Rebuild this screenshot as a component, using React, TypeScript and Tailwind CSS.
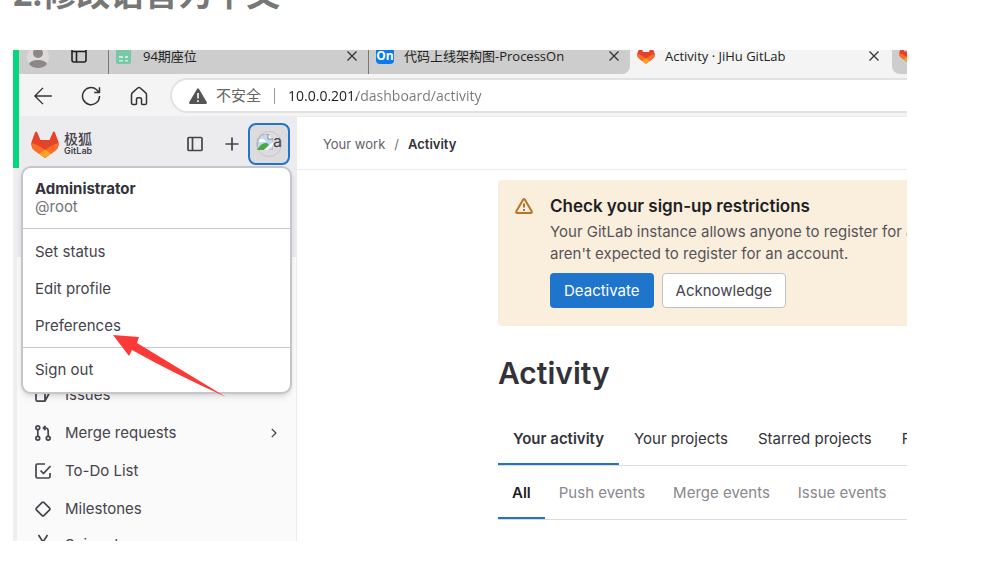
import { ReactNode } from "react";

const accountLinks = ["Set status", "Edit profile", "Preferences"];
const scopeTabs = ["Your activity", "Your projects", "Starred projects", "Followed users"];
const eventTabs = ["All", "Push events", "Merge events", "Issue events"];

function Tanuki({ className }: { className: string }) {
  return (
    <svg className={className} viewBox="0 0 28 27" aria-hidden="true">
      <path d="M.500 11 4.200 1Q5 -.200 6 1L9.500 9H18.500L22 1Q23 -.200 23.800 1L27.500 11Q28.500 16 24.500 19.500L14 27 3.500 19.500Q-.500 16 .500 11Z" fill="#e24329" />
      <path d="M.400 12Q6 13 14 19L8 22.700 3.500 19.500Q-.200 16.500 .400 12ZM27.600 12Q22 13 14 19L20 22.700 24.500 19.500Q28.200 16.500 27.600 12Z" fill="#fc6d26" />
      <path d="M14 18.500 20 22.700 14 27 8 22.700Z" fill="#fca326" />
    </svg>
  );
}

function Glyph({ children, className = "w-4 h-4" }: { children: ReactNode; className?: string }) {
  return (
    <svg
      className={`${className} shrink-0`}
      viewBox="0 0 16 16"
      fill="none"
      stroke="currentColor"
      strokeWidth="1.7"
      strokeLinejoin="round"
      aria-hidden="true"
    >
      {children}
    </svg>
  );
}

const navItems = [
  {
    label: "Issues",
    icon: <path d="M10 14.200H2.500Q1 14.200 1 12.500V3.500Q1 2 2.500 2H8.500Q10 2 10 3.500V14.200L14.800 5 12 3.500" />,
  },
  {
    label: "Merge requests",
    chevron: true,
    icon: (
      <>
        <circle cx="2.800" cy="2.800" r="1.900" />
        <circle cx="2.800" cy="13.200" r="1.900" />
        <circle cx="13.200" cy="13.200" r="1.900" />
        <path d="M2.800 4.700V11.300M13.200 11.300V6Q13.200 3 10.500 3H8.500M10.500 .800 8.300 3 10.500 5.200" />
      </>
    ),
  },
  {
    label: "To-Do List",
    icon: <path d="M10 1H2.500Q1 1 1 2.500V13.500Q1 15 2.500 15H13.500Q15 15 15 13.500V10M5.500 7.500 8.500 10.500 15.500 3" />,
  },
  {
    label: "Milestones",
    icon: <path d="M7.200 1.400Q8 .700 8.800 1.400L14.600 7.200Q15.300 8 14.600 8.800L8.800 14.600Q8 15.300 7.200 14.600L1.400 8.800Q.700 8 1.400 7.200Z" />,
  },
];

function TabClose() {
  return (
    <button aria-label="Close tab" className="flex h-3 shrink-0 items-start text-[#333]">
      <Glyph className="w-3 h-3">
        <path d="M2 2 14 14M14 2 2 14" />
      </Glyph>
    </button>
  );
}

function TabStrip() {
  return (
    <div className="flex h-6 bg-[#f4f4f4] overflow-hidden text-[13px] text-[#222] whitespace-nowrap">
      <div className="flex w-[617px] shrink-0 rounded-br-lg bg-[#cdcdcd]">
        <div className="flex w-[95px] shrink-0 gap-[22px] pl-[14px]">
          <svg className="w-[22px] h-[18px]" viewBox="0 0 20 18" aria-hidden="true">
            <circle cx="10" cy="7" r="11" fill="#dcdbd9" />
            <circle cx="10" cy="3" r="5" fill="#8d8785" />
            <path d="M1 14Q3 10 10 10T19 14Q16 18 10 18T1 14Z" fill="#8d8785" />
          </svg>
          <svg className="w-4 h-[13px]" viewBox="0 0 16 13" fill="none" stroke="#222" strokeWidth="1.600" aria-hidden="true">
            <path d="M1 0V10Q1 12 3 12H13Q15 12 15 10V0M1 1.500H15M5.500 1.500V12" />
          </svg>
        </div>
        <div className="flex w-[260px] shrink-0 border-l border-[#777] pl-[7px] pr-[10px]">
          <svg className="w-4 h-[14px] shrink-0" viewBox="0 0 16 14" aria-hidden="true">
            <path d="M0 0H15V12Q15 14 13 14H2Q0 14 0 12Z" fill="#77c9a6" />
            <path d="M3 6H7V8H3ZM9 6H12V8H9ZM3 10H7V11.500H3ZM9 10H12V11.500H9Z" fill="#c5eedc" />
          </svg>
          <span className="grow pl-[11px] leading-3">94期座位</span>
          <TabClose />
        </div>
        <div className="flex w-[262px] shrink-0 border-l border-[#777] pl-[7px] pr-[10px]">
          <span className="h-[14px] w-[18px] rounded-b bg-[#087bf0] text-center text-xs leading-3 font-bold text-white">On</span>
          <span className="grow pl-[10px] leading-3">代码上线架构图-ProcessOn</span>
          <TabClose />
        </div>
      </div>
      <div className="flex grow pl-[7px] pr-3">
        <Tanuki className="h-[18px] w-[18px] shrink-0 -mt-1" />
        <span className="grow pl-[10px] leading-3">Activity · JiHu GitLab</span>
        <TabClose />
      </div>
      <div className="flex w-[15px] shrink-0 overflow-hidden rounded-bl-lg bg-[#cdcdcd] pl-[7px]">
        <Tanuki className="h-4 w-4 shrink-0 -mt-1" />
      </div>
    </div>
  );
}

function Toolbar() {
  return (
    <div className="flex h-[43px] items-center border-b border-[#ececec] bg-[#f4f4f4] pt-px pl-5">
      <div className="flex w-[137px] shrink-0 gap-7 text-[#333]">
        <button aria-label="Back">
          <Glyph className="w-5 h-5">
            <path d="M15 8H1.500M8 1.500 1.500 8 8 14.500" strokeWidth="1.100" />
          </Glyph>
        </button>
        <button aria-label="Refresh">
          <Glyph className="w-5 h-5">
            <path d="M14.800 8A6.800 6.800 0 1 1 12.500 3L14.500 5M14.800 1V5.200H10.600" strokeWidth="1.200" />
          </Glyph>
        </button>
        <button aria-label="Home">
          <Glyph className="w-5 h-5">
            <path d="M2 7Q2 6 2.800 5.300L7 1.600Q8 .800 9 1.600L13.200 5.300Q14 6 14 7V13.500Q14 14.800 12.700 14.800H10.800Q10 14.800 10 14V10.500Q10 9.300 8.800 9.300H7.200Q6 9.300 6 10.500V14Q6 14.800 5.200 14.800H3.300Q2 14.800 2 13.500Z" strokeWidth="1.200" />
          </Glyph>
        </button>
      </div>
      <div className="flex h-[35px] grow items-center rounded-l-full border-2 border-r-0 border-[#e2e2e2] bg-white pl-[17px] text-sm">
        <svg className="w-[18px] h-4 shrink-0" viewBox="0 0 18 16" aria-hidden="true">
          <path d="M8 1Q9 -.700 10 1L17.700 14Q18.500 16 16.500 16H1.500Q-.500 16 .300 14Z" fill="#555" />
          <path d="M9 5V10.500M9 12.200V14" stroke="#fff" strokeWidth="1.600" />
        </svg>
        <button className="pl-[9px] text-[15px] text-[#666]">不安全</button>
        <span className="mx-[13px] h-4 w-px bg-[#999]" />
        <input
          type="text"
          aria-label="Address"
          defaultValue="10.0.0.201/dashboard/activity"
          className="min-w-0 grow bg-[linear-gradient(90deg,#1b1b1b_69px,#777_69px)] bg-clip-text text-transparent outline-none"
        />
      </div>
    </div>
  );
}

function UserMenu() {
  return (
    <div className="absolute top-[49px] left-1 z-10 w-[271px] rounded-[10px] border-2 border-[#c6c5cb] bg-white shadow-md text-[#45434b]">
      <div className="px-3 py-3 leading-[18px]">
        <p className="font-bold text-[#333238]">Administrator</p>
        <p className="text-[#737278]">@root</p>
      </div>
      <div className="border-y border-[#c6c5cb] pt-[5px] pb-[2px]">
        {accountLinks.map((label) => (
          <a key={label} href="#" className="flex h-[37px] items-center px-3">
            {label}
          </a>
        ))}
      </div>
      <a href="#" className="flex h-11 items-center px-3">
        Sign out
      </a>
      {/* Pointer to Preferences */}
      <svg className="absolute top-[167px] left-[90px] h-[63px] w-[114px]" viewBox="0 0 114 63" aria-hidden="true">
        <path d="M0 0 26 2 24 8 113 62Q60 38 19 15L16 21Z" fill="#fb3a38" />
      </svg>
    </div>
  );
}

function Sidebar() {
  return (
    <aside className="relative w-[283px] shrink-0 border-l-4 border-[#efeff0] bg-[#fafafa] text-[15px] text-[#45434b]">
      <div className="h-[140px] bg-[#ececef]">
        <div className="flex items-center pt-[6px] pl-[14px] pr-[6px]">
          <a href="#" aria-label="Homepage" className="flex grow items-center gap-[5px]">
            <Tanuki className="w-[28px] h-[27px]" />
            <span className="flex flex-col">
              <span className="text-sm leading-[14px] font-medium">极狐</span>
              <span className="text-[9px] leading-[10px] font-semibold">GitLab</span>
            </span>
          </a>
          <div className="flex items-center">
            <button aria-label="Collapse sidebar" className="mr-[21px]">
              <Glyph>
                <path d="M2 1.500H14Q15 1.500 15 2.500V13.500Q15 14.500 14 14.500H2Q1 14.500 1 13.500V2.500Q1 1.500 2 1.500ZM5.500 1.500V14.500" />
              </Glyph>
            </button>
            <button aria-label="Create new" className="mr-2">
              <Glyph>
                <path d="M8 1.500V14.500M1.500 8H14.500" />
              </Glyph>
            </button>
            <button
              aria-label="User menu"
              className="flex h-[42px] w-[42px] items-center justify-center rounded-lg border-2 border-[#1f75cb] bg-[#dcdcde]"
            >
              <span className="flex h-[26px] w-[26px] rounded-full border border-[#c8c8cb] text-base leading-[18px]">
                <svg className="h-4 w-4 shrink-0 mt-[2px]" viewBox="0 0 16 16" aria-hidden="true">
                  <path d="M1 5Q3 1 7 0H11L16 5V16H0Z" fill="#c4d8f6" stroke="#aaa" />
                  <path d="M11 0V5H16" fill="#fff" stroke="#888" />
                  <path d="M2 7Q3 4 6 5T9 8H2Z" fill="#fff" />
                  <path d="M0 16Q4 8 10 9L12 11 7 16Z" fill="#4ba843" />
                  <path d="M7 16 16 8V11L11 16Z" fill="#fff" />
                </svg>
                a
              </span>
            </button>
          </div>
        </div>
      </div>
      <UserMenu />
      <nav className="pt-[119px]">
        {navItems.map((item) => (
          <a key={item.label} href="#" className="flex h-[38px] items-center gap-[14px] pl-[18px] pr-4">
            <Glyph>{item.icon}</Glyph>
            <span className="grow">{item.label}</span>
            {item.chevron && (
              <Glyph className="w-3 h-3">
                <path d="M5 2.500 10.500 8 5 13.500" />
              </Glyph>
            )}
          </a>
        ))}
        <a href="#" className="flex h-[13px] items-start gap-[14px] overflow-hidden pl-[18px] pt-[6px]">
          <Glyph>
            <path d="M3.500 1 10 11M12.500 1 6 11M3.500 11A2 2 0 1 0 3.500 15 2 2 0 1 0 3.500 11M12.500 11A2 2 0 1 0 12.500 15 2 2 0 1 0 12.500 11" />
          </Glyph>
          <span>Snippets</span>
        </a>
      </nav>
    </aside>
  );
}

export default function App() {
  return (
    <div className="overflow-hidden bg-white font-['Inter','Noto_Sans_CJK_SC',sans-serif]">
      <h2 className="-mt-[26px] mb-[37px] pl-[13px] font-['Open_Sans','Noto_Sans_CJK_SC',sans-serif] text-[34px] leading-[39px] font-bold text-[#777]">
        2.修改语言为中文
      </h2>

      <div className="relative ml-[13px] mr-[88px] overflow-hidden">
        <div className="absolute top-0 left-0 z-20 h-[118px] w-[6px] bg-[#05d77e]" />
        <div className="font-['Open_Sans','Noto_Sans_CJK_SC',sans-serif]">
          <TabStrip />
          <Toolbar />
        </div>

        <div className="flex">
          <Sidebar />
          <main className="min-w-0 grow overflow-hidden whitespace-nowrap border-l border-[#ececef] text-[15px] text-[#333238]">
            <nav aria-label="Breadcrumb" className="flex h-[53px] items-center gap-[9px] border-b border-[#ececef] pt-[3px] pl-[26px] text-[13px]">
              <a href="#" className="text-[#626168]">Your work</a>
              <span className="text-[#737278]">/</span>
              <a href="#" className="font-semibold">Activity</a>
            </nav>

            <div className="pt-[10px] pl-[201px]">
              {/* Sign-up notice */}
              <section className="flex h-[146px] gap-[17px] rounded-l bg-[#faefdc] pt-[15px] pl-[17px]">
                <svg className="mt-[3px] h-4 w-[18px] shrink-0" viewBox="0 0 18 16" fill="none" stroke="#b9722a" strokeWidth="2" strokeLinejoin="round" aria-hidden="true">
                  <path d="M8.200 1.500Q9 .500 9.800 1.500L16.800 13.500Q17 15 16 15H2Q1 15 1.200 13.500ZM9 5.500V9.500M9 11V13" />
                </svg>
                <div>
                  <h2 className="text-[17px] leading-[22px] font-semibold text-[#1f1e24]">Check your sign-up restrictions</h2>
                  <p className="pt-1 leading-[22px] text-[#57535a]">
                    Your GitLab instance allows anyone to register for an account, even if they
                    <br />
                    aren't expected to register for an account.
                  </p>
                  <div className="flex gap-2 pt-2">
                    <button className="h-[35px] rounded bg-[#1f75cb] px-[14px] pt-px text-white">Deactivate</button>
                    <button className="h-[35px] rounded border border-[#bfbfc3] bg-white px-[13px] pt-px text-[#45434b]">Acknowledge</button>
                  </div>
                </div>
              </section>

              <h1 className="pt-7 text-[30px] leading-[38px] font-semibold">Activity</h1>

              <div className="mt-5 flex h-[54px] border-b border-[#dcdcde]">
                {scopeTabs.map((label, i) => (
                  <button
                    key={label}
                    className={`border-b-2 px-[15px] pt-1 ${i === 0 ? "border-[#1f75cb] font-semibold" : "border-transparent"}`}
                  >
                    {label}
                  </button>
                ))}
              </div>
              <div className="flex h-[54px] border-b border-[#dcdcde]">
                {eventTabs.map((label, i) => (
                  <button
                    key={label}
                    className={`border-b-2 px-[14px] pt-1 ${i === 0 ? "border-[#1f75cb] font-semibold text-[#1f1e24]" : "border-transparent text-[#89888d]"}`}
                  >
                    {label}
                  </button>
                ))}
              </div>
            </div>
          </main>
        </div>
      </div>
    </div>
  );
}
